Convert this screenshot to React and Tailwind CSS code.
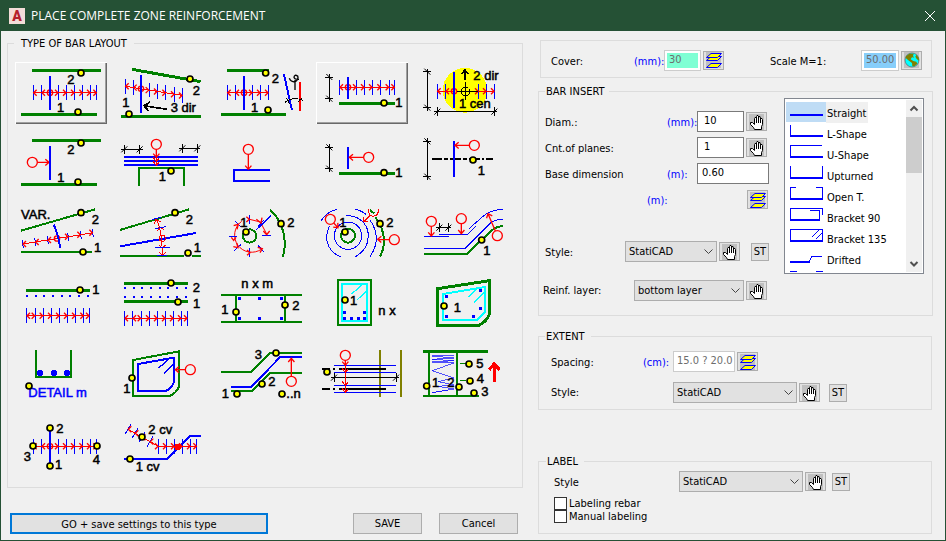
import React, { useState } from 'react';
import clsx from 'clsx';

const GREEN = '#008000';
const BLUE = '#0000ff';
const RED = '#ff0000';
const BLACK = '#000000';

/* ---------- drawing helpers, 3 units = 1 px ---------- */

const P = ({ d, c = BLACK, w = 3, ...rest }) => (
  <path d={d} fill="none" stroke={c} strokeWidth={w} {...rest} />
);

const Dots = ({ at }) => at.map(([x, y]) => (
  <circle key={`${x}-${y}`} cx={x} cy={y} r="9" fill="#ffff00" stroke={BLACK} strokeWidth="5" shapeRendering="auto" />
));

const T = ({ x, y, c = BLACK, children }) => (
  <text x={x} y={y} fill={c} stroke={c} strokeWidth="1.5" fontSize="39" fontFamily="Liberation Sans, Arial, sans-serif">
    {children}
  </text>
);

const Squares = ({ at }) => at.map(([x, y]) => (
  <rect key={`${x}-${y}`} x={x - 4} y={y - 4} width="9" height="9" fill={BLUE} />
));

// Arrow from one point to another, open head at the end
const Arrow = ({ from, to, c = RED, w = 3, size = 12 }) => {
  const a = Math.atan2(to[1] - from[1], to[0] - from[0]);
  const leg = (s) => `${to[0] - size * 1.2 * Math.cos(a + s)} ${to[1] - size * 1.2 * Math.sin(a + s)}`;
  return <P c={c} w={w} d={`M${from[0]} ${from[1]}L${to[0]} ${to[1]}M${leg(0.7)}L${to[0]} ${to[1]}L${leg(-0.7)}`} />;
};

// Row of stirrups with red arrows going out of the base bar
const Series = ({ xs, y, base, slope = 0, h = 22, lean = 0, ring = true }) => {
  const at = (x) => y + (x - xs[0]) * slope;
  const last = xs[xs.length - 1];
  return (
    <g>
      {xs.map((x) => (
        <P key={x} c={BLUE} d={`M${x + lean} ${at(x) - h}L${x - lean} ${at(x) + h}`} />
      ))}
      <P c={RED} d={`M${xs[0]} ${y}L${last} ${at(last)}`} />
      <g shapeRendering="auto">
        {xs.map((x) => (
          <P key={x} c={RED} w={4} d={x < base
            ? `M${x + 10} ${at(x) - 9}L${x + 1} ${at(x)}L${x + 10} ${at(x) + 9}`
            : `M${x - 10} ${at(x) - 9}L${x - 1} ${at(x)}L${x - 10} ${at(x) + 9}`} />
        ))}
        {ring && <circle cx={base} cy={at(base)} r="8" fill="none" stroke={RED} strokeWidth="4" />}
      </g>
    </g>
  );
};

const DimV = ({ x, y1, y2 }) => (
  <g>
    <P d={`M${x} ${y1 - 9}V${y2 + 9}M${x - 13} ${y1}H${x + 12}M${x - 13} ${y2}H${x + 12}`} />
    <P shapeRendering="auto" d={`M${x - 9} ${y1 - 9}L${x + 9} ${y1 + 9}M${x - 9} ${y2 - 9}L${x + 9} ${y2 + 9}`} />
  </g>
);

const DimH = ({ y, x1, x2 }) => (
  <g>
    <P d={`M${x1 - 9} ${y}H${x2 + 9}M${x1} ${y - 13}V${y + 13}M${x2} ${y - 13}V${y + 13}`} />
    <P shapeRendering="auto" d={`M${x1 - 9} ${y + 9}L${x1 + 9} ${y - 9}M${x2 - 9} ${y + 9}L${x2 + 9} ${y - 9}`} />
  </g>
);

const Ring = ({ x, y, to }) => {
  const a = Math.atan2(to[1] - y, to[0] - x);
  return (
    <g shapeRendering="auto">
      <circle cx={x} cy={y} r="15" fill="none" stroke={RED} strokeWidth="4" />
      <Arrow from={[x + 15 * Math.cos(a), y + 15 * Math.sin(a)]} to={to} w={4} />
    </g>
  );
};

// Hoops around a round column, angles clockwise in degrees
const spiral = [-48, -90, -134, 180, 136, 90, 48].map((deg) => {
  const a = (deg * Math.PI) / 180;
  return { a, x: 719 + 50 * Math.cos(a), y: 318 + 50 * Math.sin(a) };
});

/* ---------- bar layout types ---------- */

const layouts = [
  { name: 'Two edges', box: '45 186', raised: true, art: (
    <>
      <P c={GREEN} w={9} d="M96 211H303M63 343H291" />
      <Series xs={[100, 125, 175, 199, 223, 248, 271, 290]} y={278} base={150} />
      <P c={BLUE} w={6} d="M150 228V330" />
      <Dots at={[[243, 219], [234, 336]]} />
      <T x={202} y={252}>2</T><T x={171} y={336}>1</T>
    </>
  ) },
  { name: 'Two edges with direction', box: '345 186', art: (
    <>
      <P c={GREEN} w={9} d="M396 208L602 245M363 349H602" />
      <Series xs={[376, 400, 447, 472, 497, 523, 547]} y={259} slope={0.16} base={423} />
      <P c={BLUE} w={6} d="M423 225V339" />
      <Arrow from={[500, 328]} to={[432, 317]} c={BLACK} w={5} size={18} />
      <Dots at={[[570, 237], [387, 342]]} />
      <T x={578} y={286}>2</T><T x={367} y={321}>1</T><T x={512} y={335}>3 dir</T>
    </>
  ) },
  { name: 'Two edges with angle', box: '648 186', art: (
    <>
      <P c={GREEN} w={9} d="M681 211H807M663 343H858" />
      <Series xs={[682, 707, 757, 781, 805]} y={278} base={732} />
      <P c={BLUE} w={6} d="M732 228V330" />
      <P c={BLUE} w={6} d="M852 223L876 331" />
      <P c={RED} w={6} d="M900 246V332" />
      <P d="M855 307Q868 297 880 296Q895 295 908 301M860 294L869 312M894 306L906 294" />
      <P w={4} shapeRendering="auto" d="M885 240V270M868 235Q872 246 885 246Q897 238 893 228Q883 222 882 232Q884 239 897 238" />
      <Dots at={[[797, 219], [804, 330]]} />
      <T x={815} y={249}>2</T><T x={753} y={336}>1</T>
    </>
  ) },
  { name: 'One edge', box: '318 21', raised: true, art: (
    <>
      <DimV x={358} y1={66} y2={131} />
      <P c={GREEN} w={9} d="M387 146H555" />
      <Series xs={[389, 439, 463, 487, 512, 537, 554]} y={97} base={414} />
      <P c={BLUE} w={6} d="M414 66V132" />
      <Dots at={[[522, 144]]} />
      <T x={556} y={155}>1</T>
    </>
  ) },
  { name: 'Center and direction', box: '621 21', art: (
    <>
      <circle cx="765" cy="106" r="67" fill="#ffff00" />
      <DimV x={652} y1={50} y2={158} />
      <DimH y={170} x1={682} x2={853} />
      <Series xs={[682, 707]} y={109} base={732} />
      <Series xs={[805, 829, 853]} y={109} base={790} ring={false} />
      <P c={RED} d="M707 109H732" />
      <P c={BLUE} w={6} d="M732 51V158" />
      <P d="M740 109H805M767 82V136" />
      <circle cx="767" cy="109" r="13" fill="none" stroke={BLACK} strokeWidth="3" />
      <Arrow from={[765, 74]} to={[765, 45]} c={BLACK} w={5} size={14} />
      <T x={790} y={75}>2 dir</T><T x={747} y={159}>1 cen</T>
    </>
  ) },
  { name: 'Single bar, two edges', box: '15 6', art: (
    <>
      <P c={GREEN} w={9} d="M66 31H273M33 163H261" />
      <Ring x={67} y={97} to={[117, 97]} />
      <P c={BLUE} w={6} d="M120 48V150" />
      <Dots at={[[213, 39], [204, 156]]} />
      <T x={172} y={72}>2</T><T x={142} y={155}>1</T>
    </>
  ) },
  { name: 'Bars over support', box: '315 6', art: (
    <>
      <DimH y={58} x1={343} x2={389} />
      <DimH y={55} x1={517} x2={562} />
      <P c={BLUE} w={6} d="M342 81H564M342 93H564M342 105H564" />
      <P c={GREEN} w={6} d="M387 168V114H522V168" />
      <Ring x={439} y={43} to={[439, 82]} />
      <Arrow from={[439, 60]} to={[439, 94]} /><Arrow from={[439, 60]} to={[439, 106]} />
      <Dots at={[[483, 123]]} />
      <T x={446} y={152}>1</T>
    </>
  ) },
  { name: 'Bracket bar', box: '618 6', art: (
    <>
      <P c={BLUE} w={6} d="M780 120H672V153H780" />
      <Ring x={715} y={58} to={[715, 118]} />
    </>
  ) },
  { name: 'Single bar, one edge', box: '318 6', art: (
    <>
      <DimV x={358} y1={52} y2={116} />
      <P c={GREEN} w={9} d="M387 130H555" />
      <P c={BLUE} w={6} d="M414 51V117" />
      <Ring x={476} y={82} to={[418, 82]} />
      <Dots at={[[522, 128]]} />
      <T x={556} y={140}>1</T>
    </>
  ) },
  { name: 'Single bar on axis', box: '621 6', art: (
    <>
      <DimV x={652} y1={34} y2={140} />
      <P w={6} d="M666 87H696M702 87H714M720 87H753M759 87H771M777 87H810M816 87H822M828 87H849" />
      <P c={BLUE} w={6} d="M732 33V141" />
      <Ring x={793} y={46} to={[735, 46]} />
      <Dots at={[[789, 90]]} />
      <T x={803} y={134}>1</T>
    </>
  ) },
  { name: 'Variable length', box: '15 216', art: (
    <>
      <P c={GREEN} w={6} d="M33 302L255 238M33 366H246" />
      <Series xs={[38, 76, 113, 175, 212, 248]} y={342} slope={-0.16} h={12} lean={-2} base={141} />
      <P c={BLUE} w={6} d="M131 284Q144 310 151 355" />
      <Dots at={[[213, 248], [219, 366]]} />
      <T x={33} y={267}>VAR.</T><T x={245} y={281}>2</T><T x={252} y={367}>1</T>
    </>
  ) },
  { name: 'Fan between edges', box: '315 216', art: (
    <>
      <P c={GREEN} w={6} d="M330 300L537 238M330 378H522M546 378H573" />
      <P c={BLUE} w={6} d="M330 349L558 309" />
      <P c={RED} d="M438 267Q456 296 457 376" />
      <P c={RED} d="M432 282L438 268L453 276M442 304L448 290L461 298M448 346L457 355L466 346M447 366L457 376L468 366" />
      <P c={BLUE} d="M425 269L452 262M436 296L467 290M436 352H480M442 376H472" />
      <circle cx="457" cy="325" r="9" fill="none" stroke={RED} strokeWidth="3" />
      <Dots at={[[495, 248], [534, 369]]} />
      <T x={527} y={282}>2</T><T x={551} y={366}>1</T>
    </>
  ) },
  { name: 'Radial', box: '618 216', art: (
    <>
      <P c={RED} shapeRendering="auto" d="M719 268L751 276L770 312M695 274A50 50 0 0 0 755 357" />
      {spiral.map(({ a, x, y }) => (
        <P key={a} c={BLUE} d={`M${x - 13 * Math.cos(a)} ${y - 13 * Math.sin(a)}L${x + 13 * Math.cos(a)} ${y + 13 * Math.sin(a)}`} />
      ))}
      <P c={BLUE} d="M757 316H782" />
      <P c={RED} w={4} shapeRendering="auto" d="M760 303L770 314L779 303M739 268L753 279L756 263M709 260L718 268L709 276M681 298L685 283L671 287M664 322L671 331L678 322M680 339L684 353L670 350M711 360L720 368L711 376M743 352L757 356L750 368" />
      <P c={BLUE} w={4} d="M738 300L783 257" />
      <circle cx="719" cy="318" r="20" fill="none" stroke={GREEN} strokeWidth="6" />
      <P c={GREEN} w={6} d="M780 240L790 249Q813 275 820 307Q829 345 819 380" />
      <Dots at={[[708, 306], [813, 281]]} />
      <T x={691} y={290}>1</T><T x={832} y={290}>2</T>
    </>
  ) },
  { name: 'Circular', box: '318 216', art: (
    <>
      <circle cx="414" cy="317" r="41" fill="none" stroke={BLUE} strokeWidth="3" />
      <P c={BLUE} d="M358 289Q342 322 357 350Q368 372 393 380M408 257Q458 257 473 300Q483 355 436 380M333 272Q350 245 382 238M435 238Q456 242 469 254M480 270Q518 325 480 380" />
      <circle cx="414" cy="317" r="21" fill="none" stroke={GREEN} strokeWidth="6" />
      <P c={GREEN} w={6} d="M480 240L492 250M496 262Q515 285 520 315Q526 350 510 380" />
      <Ring x={361} y={268} to={[384, 293]} />
      <P c={RED} d="M476 238Q475 259 490 259Q506 257 505 238" />
      <Arrow from={[480, 256]} to={[460, 276]} />
      <Ring x={553} y={329} to={[503, 328]} />
      <Dots at={[[405, 306], [510, 281]]} />
      <T x={388} y={290}>1</T><T x={529} y={290}>2</T>
    </>
  ) },
  { name: 'Stairs bend', box: '621 216', art: (
    <>
      <P c={BLUE} d="M642 319H717M687 314H772L798 289M777 296L818 260Q842 239 879 238M642 355H765L842 278Q855 268 879 268" />
      <P c={GREEN} w={6} d="M642 372H770L843 303Q857 290 879 288" />
      <DimH y={293} x1={688} x2={715} />
      <Ring x={664} y={274} to={[664, 318]} />
      <Ring x={754} y={266} to={[754, 311]} />
      <Ring x={862} y={317} to={[834, 251]} />
      <Dots at={[[815, 330]]} />
      <T x={820} y={374}>1</T>
    </>
  ) },
  { name: 'Section, one layer', box: '15 21', art: (
    <>
      <P c={GREEN} w={9} d="M48 76H240" />
      <P c={BLUE} w={6} d="M48 93H240" strokeDasharray="6 20" />
      <Series xs={[50, 75, 99, 124, 148, 172, 196, 221, 238]} y={152} base={70} ring={false} />
      <Dots at={[[210, 75]]} />
      <T x={247} y={87}>1</T>
    </>
  ) },
  { name: 'Section, two layers', box: '315 21', art: (
    <>
      <P c={GREEN} w={9} d="M342 56H534M342 110H534" />
      <P c={BLUE} w={6} d="M342 69H534M342 96H534" strokeDasharray="6 20" />
      <Series xs={[344, 368, 393, 418, 442, 466, 490, 514, 532]} y={160} base={380} ring={false} />
      <Dots at={[[483, 54], [504, 111]]} />
      <T x={548} y={80}>2</T><T x={549} y={129}>1</T>
    </>
  ) },
  { name: 'Rectangle n x m', box: '618 21', art: (
    <>
      <P c={GREEN} w={6} d="M633 90H876M633 171H876M678 90V171M825 90V171" />
      <Squares at={[[688, 100], [748, 100], [814, 100], [688, 160], [748, 160], [814, 160]]} />
      <Dots at={[[678, 141], [825, 120]]} />
      <T x={694} y={69}>n x m</T><T x={634} y={147}>1</T><T x={847} y={135}>2</T>
    </>
  ) },
  { name: 'Column n x', box: '318 21', art: (
    <>
      <P c={GREEN} w={6} d="M384 45H483V180H384Z" />
      <P c="#00ffff" w={6} d="M396 57H471V168H396Z" />
      <P c="#00ffff" w={4} d="M455 60L425 87M470 77L442 104" />
      <Squares at={[[404, 142], [463, 142], [404, 160], [424, 160], [444, 160], [463, 160]]} />
      <Dots at={[[405, 105]]} />
      <T x={420} y={120}>1</T><T x={505} y={150}>n x</T>
    </>
  ) },
  { name: 'Polygon column', box: '621 21', art: (
    <>
      <P c={GREEN} w={9} d="M683 71L838 47V148Q829 171 806 181H683Z" />
      <P c="#00ffff" w={6} d="M699 87L824 66V141L802 165H699Z" />
      <P c="#00ffff" w={4} d="M801 70L776 96M822 82L792 112" />
      <Squares at={[[709, 94], [811, 76], [811, 130], [790, 154], [709, 154]]} />
      <Dots at={[[702, 123]]} />
      <T x={731} y={142}>1</T>
    </>
  ) },
  { name: 'Detail m', box: '15 231', art: (
    <>
      <P c={GREEN} w={6} d="M78 255V336H183V255" />
      {[90, 132, 171].map((x) => <circle key={x} cx={x} cy="324" r="9" fill={BLUE} />)}
      <T x={55} y={396} c={BLUE}>DETAIL m</T>
      <Dots at={[[57, 363]]} />
    </>
  ) },
  { name: 'Polygon hoop', box: '315 231', art: (
    <>
      <P c={GREEN} w={6} d="M369 285L507 259V364Q499 385 478 393H369Z" />
      <P c={BLUE} w={6} d="M384 297L492 278V350Q486 370 467 378H384Z" />
      <P c={BLUE} w={4} d="M477 282L446 309M490 298L462 325" />
      <Ring x={541} y={314} to={[496, 314]} />
      <Dots at={[[366, 339]]} />
      <T x={340} y={383}>1</T>
    </>
  ) },
  { name: 'Polyline path', box: '618 231', art: (
    <>
      <P c={GREEN} w={6} d="M633 321H723L780 264H876M663 378H725L780 324H876" />
      <P c={BLUE} w={6} d="M663 366H723L811 276H876" />
      <Ring x={844} y={349} to={[844, 280]} />
      <Dots at={[[798, 264], [756, 357], [681, 387], [816, 387]]} />
      <T x={734} y={282}>3</T><T x={775} y={363}>2</T><T x={635} y={400}>1</T><T x={829} y={400}>..n</T>
    </>
  ) },
  { name: 'Axis section', box: '318 231', art: (
    <>
      <P c="#808000" w={6} d="M510 255V396M573 255V396" />
      <P c={BLUE} d="M372 301H558M372 322H558M372 361H558M372 382H558" />
      <P w={6} d="M336 312H360M369 312H375M387 312H528M336 372H360M369 372H375M387 372H528" />
      <DimH y={338} x1={372} x2={558} />
      <Ring x={406} y={271} to={[406, 301]} />
      <Arrow from={[406, 300]} to={[406, 322]} /><Arrow from={[406, 322]} to={[406, 361]} /><Arrow from={[406, 361]} to={[406, 382]} />
      <Dots at={[[351, 321]]} />
    </>
  ) },
  { name: 'Wall mesh', box: '621 231', art: (
    <>
      <P c={GREEN} w={9} d="M639 259H834" />
      <P c={GREEN} w={6} d="M657 259V393M741 259V393M639 393H807" />
      <P c={BLUE} w={2} d="M732 270L666 273L732 279L666 283L732 287L666 291L732 294L666 317L732 339L685 350L732 360L685 364L732 372L666 383L714 375" />
      <P c={GREEN} d="M750 296H768M750 345L768 348" />
      <Arrow from={[853, 351]} to={[853, 296]} w={9} size={20} />
      <Dots at={[[650, 363], [747, 366], [777, 297], [780, 348], [792, 384]]} />
      <T x={666} y={367}>1</T><T x={712} y={367}>2</T>
      <T x={799} y={310}>5</T><T x={800} y={354}>4</T><T x={814} y={392}>3</T>
    </>
  ) },
  { name: 'Four points', box: '45 36', art: (
    <>
      <Series xs={[100, 125, 175, 199, 223, 248, 271, 290]} y={139} base={150} />
      <P c={BLUE} w={6} d="M150 84V198" />
      <Dots at={[[99, 138], [150, 84], [150, 198], [291, 138]]} />
      <T x={71} y={182}>3</T><T x={169} y={98}>2</T><T x={165} y={206}>1</T><T x={278} y={191}>4</T>
    </>
  ) },
  { name: 'Two curves', box: '345 36', art: (
    <>
      <P c={BLUE} w={6} d="M372 177H500L569 108H603" />
      <Series xs={[475, 499, 523, 547, 571, 590]} y={139} base={470} ring={false} />
      <Series xs={[384, 405, 426, 450]} y={88} slope={0.56} h={15} lean={9} base={470} ring={false} />
      <P c={RED} d="M450 125L475 139" />
      <circle cx="533" cy="141" r="10" fill={RED} />
      <Dots at={[[426, 111], [390, 177]]} />
      <T x={445} y={102}>2 cv</T><T x={407} y={213}>1 cv</T>
    </>
  ) },
];

const LayoutButton = ({ item }) => (
  <button
    type="button"
    aria-label={item.name}
    className={clsx(
      'h-[62px] w-[92px]',
      item.raised && 'shadow-[inset_1px_1px_#ffffff,inset_-1px_-1px_#696969,inset_-2px_-2px_#a0a0a0]'
    )}
  >
    <svg width="92" height="62" viewBox={`${item.box} 276 186`} shapeRendering="crispEdges" className="block">
      {item.art}
    </svg>
  </button>
);

/* ---------- small controls ---------- */

const Hand = () => (
  <svg viewBox="0 0 15 16" className="h-4 w-[15px] overflow-visible bg-[#c0c0c0]">
    <path d="M5.5 10.5V4.5L6 3.5H7L7.5 4V2.5L8 1.5H9L9.5 2.5H11L11.5 4.5H13L13.5 5.5V10.5L12.5 12.5V15.5H5.5L4.5 13.5L1.5 10.5V8.5H3.5Z" fill="#fff" stroke="#000" />
    <path d="M7.5 4V9M9.5 2V9M11.5 4V9" stroke="#000" />
  </svg>
);

const Layers = () => (
  <svg viewBox="0 0 15 16" className="h-4 w-[15px] overflow-visible bg-[#c0c0c0]">
    <g fill="#ffff00" stroke="#0000ff">
      <path d="M5 11.5H15.5L11.5 15.5H0.5Z" />
      <path d="M5 4.5H15.5L11.5 8.5H0.5Z" />
      <path d="M5 1.5H15.5L11.5 5.5H0.5Z" />
    </g>
  </svg>
);

const Globe = () => (
  <svg viewBox="0 0 45 48" className="h-4 w-[15px] overflow-visible bg-[#c0c0c0]">
    <circle cx="24" cy="24" r="21" fill="#00ffff" stroke="#606060" strokeWidth="2" />
    <path d="M6 13L16 5H29L27 12L31 17L24 16L20 22L28 27L37 29L40 35L31 43L25 43L24 33L13 25L5 18Z" fill="#808000" />
    <path d="M37 8L44 17L45 26L38 21L34 14Z" fill="#808000" />
  </svg>
);

const IconButton = ({ label, children, className }) => (
  <button
    type="button"
    aria-label={label}
    className={clsx('flex h-[19px] w-[21px] shrink-0 items-center justify-center border border-[#adadad] bg-[#e1e1e1]', className)}
  >
    {children}
  </button>
);

const StButton = ({ className }) => (
  <button type="button" className={clsx('h-[18px] w-[18px] shrink-0 border border-[#adadad] bg-[#e1e1e1] text-center leading-4', className)}>
    ST
  </button>
);

const Select = ({ id, value, className }) => (
  <div className={clsx('relative h-[21px] shrink-0', className)}>
    <select id={id} className="block h-full w-full appearance-none border border-[#adadad] bg-[#e1e1e1] pt-px pl-[3px] leading-4 outline-none">
      <option>{value}</option>
    </select>
    <svg viewBox="0 0 9 6" className="pointer-events-none absolute top-2 right-1 h-1.5 w-[9px]" fill="none" stroke="#444">
      <path d="M0.5 0.5L4.5 4.5L8.5 0.5" />
    </svg>
  </div>
);

const Group = ({ title, legendClass, className, children }) => (
  <fieldset className={clsx('min-w-0 border border-[#dcdcdc]', className)}>
    <legend className={clsx('h-3.5 leading-4 whitespace-nowrap', legendClass)}>{title}</legend>
    {children}
  </fieldset>
);

const field = 'h-[21px] shrink-0 border pb-0.5 outline-none';
const pushButton = 'h-[21px] border bg-[#e1e1e1]';
const unit = 'w-[30px] shrink-0 whitespace-nowrap pt-1 text-[#0000ff]';
const caption = 'shrink-0 whitespace-nowrap pt-1';

/* ---------- bar shapes ---------- */

const shapes = [
  { name: 'Straight', thick: 'M4 13H37' },
  { name: 'L-Shape', thick: 'M4 13H37', thin: 'M4.5 2V13' },
  { name: 'U-Shape', thick: 'M4 13H37', thin: 'M36 1.5H4.5V13' },
  { name: 'Upturned', thick: 'M4 13H37', thin: 'M4.5 1V13M36.5 1V13' },
  { name: 'Open T.', thick: 'M4 13H37', thin: 'M10 1.5H4.5V13M30 1.5H36.5V13' },
  { name: 'Bracket 90', thick: 'M4 13H34', thin: 'M4.5 13V1.5H36.5V8M24 3.5H33.5V13' },
  { name: 'Bracket 135', thick: 'M4 13H37', thin: 'M4.5 13V1.5H36.5V13M33 2L26 9M37 4L30 11' },
  { name: 'Drifted', thick: 'M4 13H24', thin: 'M23 13L26 7.5H36' },
];

const ShapeList = () => {
  const [active, setActive] = useState('Straight');
  return (
    <div className="flex h-44 w-[140px] shrink-0 border border-[#828790] bg-white p-px">
      <ul role="listbox" aria-label="Bar shape" className="flex-1 overflow-hidden pt-0.5">
        {shapes.map((s) => (
          <li key={s.name} role="option" aria-selected={active === s.name} onClick={() => setActive(s.name)} className="flex h-[21px]">
            <svg viewBox="0 0 40 20" shapeRendering="crispEdges" className={clsx('h-5 w-10 shrink-0', active === s.name && 'bg-[#bfdcf5]')}>
              <path d={s.thick} stroke="#0000ff" strokeWidth="2" fill="none" />
              {s.thin && <path d={s.thin} stroke="#0000ff" fill="none" />}
            </svg>
            <span className={clsx('h-[21px] pr-0.5 pl-px leading-6 whitespace-nowrap', active === s.name && 'bg-[#f0f0f0]')}>{s.name}</span>
          </li>
        ))}
        <li role="option" aria-selected="false" aria-label="Open B.">
          <svg viewBox="0 0 40 20" shapeRendering="crispEdges" className="h-5 w-10">
            <path d="M4 1.5H11M30 1.5H37" stroke="#0000ff" fill="none" />
          </svg>
        </li>
      </ul>
      <div className="flex w-4 flex-col items-center bg-[#f0f0f0]">
        <svg viewBox="0 0 16 17" className="h-[17px] w-4" fill="none" stroke="#505050" strokeWidth="2"><path d="M4.5 10.5L8 7L11.5 10.5" /></svg>
        <div className="h-14 w-full bg-[#cdcdcd]" />
        <svg viewBox="0 0 16 17" className="mt-auto h-[17px] w-4" fill="none" stroke="#505050" strokeWidth="2"><path d="M4.5 7L8 10.5L11.5 7" /></svg>
      </div>
    </div>
  );
};

export default function App() {
  return (
    <div className="flex min-h-screen flex-col border-x border-b border-[#255135] bg-[#f0f0f0] font-['DejaVu_Sans_Condensed','DejaVu_Sans',sans-serif] text-[11px] text-black">
      <header className="flex h-[31px] items-center bg-[#255135] pr-2.5 pl-2 text-white">
        <svg viewBox="0 0 16 16" className="h-4 w-4">
          <rect width="16" height="16" fill="#f3dcd8" />
          <text x="8" y="13" textAnchor="middle" fontSize="14" fontWeight="900" fontFamily="Roboto, sans-serif" fill="#b5202b">A</text>
        </svg>
        <h1 className="ml-1.5 font-['Open_Sans',sans-serif] text-[12px] leading-4">PLACE COMPLETE ZONE REINFORCEMENT</h1>
        <button type="button" aria-label="Close" className="ml-auto">
          <svg viewBox="0 0 10 10" className="h-2.5 w-2.5" stroke="#fff" fill="none"><path d="M0 0L10 10M10 0L0 10" /></svg>
        </button>
      </header>

      <main className="grid grid-cols-[516fr_395fr] gap-[15px] pt-[5px] pr-3 pl-1.5">
        <div>
          <Group title="TYPE OF BAR LAYOUT" className="pr-[13px] pb-[13px] pl-[7px]" legendClass="ml-[-1px] px-[7px]">
            <div className="grid grid-cols-5 gap-2 pt-3">
              {layouts.map((item) => <LayoutButton key={item.name} item={item} />)}
            </div>
          </Group>
          <div className="mt-[25px] flex gap-[17px] pr-[5px] pl-[3px]">
            <button type="button" className={clsx(pushButton, 'w-[258px] border-2 border-[#0078d7] pt-0.5 leading-4')}>GO + save settings to this type</button>
            <button type="button" className={clsx(pushButton, 'ml-auto w-[69px] border-[#adadad] pt-0.5')}>SAVE</button>
            <button type="button" className={clsx(pushButton, 'w-[79px] border-[#adadad] pt-0.5')}>Cancel</button>
          </div>
        </div>

        <div className="flex flex-col">
          <section className="mt-1 mr-px ml-0.5 flex h-[38px] items-center border border-[#dcdcdc] pt-2 pr-[9px] pb-1.5 pl-2.5">
            <label htmlFor="cover" className={clsx(caption, 'w-[83px]')}>Cover:</label>
            <span className={unit}>(mm):</span>
            <input id="cover" disabled defaultValue="30" className={clsx(field, 'w-[37px] border-[#cccccc] bg-[#7fffd4] pl-1 text-[#6d6d6d] shadow-[inset_0_0_0_2px_#ffffff]')} />
            <IconButton label="Pick cover" className="ml-0.5"><Layers /></IconButton>
            <label htmlFor="scale" className={clsx(caption, 'ml-auto w-[91px]')}>Scale M=1:</label>
            <input id="scale" disabled defaultValue="50.00" className={clsx(field, 'w-[38px] border-[#cccccc] bg-[#87cefa] pl-1 text-[#6d6d6d] shadow-[inset_0_0_0_2px_#ffffff]')} />
            <IconButton label="Global scale" className="ml-0.5"><Globe /></IconButton>
          </section>

          <Group title="BAR INSERT" className="mt-1.5 h-[232px] pr-2" legendClass="ml-1.5 pr-1 pl-px">
            <div className="flex items-start justify-between">
              <div className="flex w-[231px] flex-col gap-[5px] pt-[13px] pl-1.5">
                <div className="flex h-[21px] items-center">
                  <label htmlFor="diam" className={clsx(caption, 'w-[122px]')}>Diam.:</label>
                  <span className={unit}>(mm):</span>
                  <input id="diam" defaultValue="10" className={clsx(field, 'w-[47px] border-[#7a7a7a] bg-white pl-1.5')} />
                  <IconButton label="Pick diameter" className="ml-0.5"><Hand /></IconButton>
                </div>
                <div className="flex h-[21px] items-center">
                  <label htmlFor="planes" className={clsx(caption, 'w-[152px]')}>Cnt.of planes:</label>
                  <input id="planes" defaultValue="1" className={clsx(field, 'w-[47px] border-[#7a7a7a] bg-white pl-1.5')} />
                  <IconButton label="Pick planes" className="ml-0.5"><Hand /></IconButton>
                </div>
                <div className="flex h-[21px] items-center">
                  <label htmlFor="base" className={clsx(caption, 'w-[122px]')}>Base dimension</label>
                  <span className={unit}>(m):</span>
                  <input id="base" defaultValue="0.60" className={clsx(field, 'w-[72px] border-[#7a7a7a] bg-white pl-1')} />
                </div>
                <div className="flex h-[21px] items-center justify-between pr-0.5 pl-[102px]">
                  <span className={unit}>(m):</span>
                  <IconButton label="Pick dimension"><Layers /></IconButton>
                </div>
                <div className="mt-[26px] flex h-[21px] items-center">
                  <label htmlFor="bar-style" className={clsx(caption, 'w-20')}>Style:</label>
                  <Select id="bar-style" value="StatiCAD" className="w-[92px]" />
                  <IconButton label="Pick bar style" className="ml-0.5"><Hand /></IconButton>
                  <StButton className="ml-[11px]" />
                </div>
                <div className="mt-[13px] -ml-0.5 flex h-[21px] items-center">
                  <label htmlFor="layer" className="w-[91px] pt-0.5 whitespace-nowrap">Reinf. layer:</label>
                  <Select id="layer" value="bottom layer" className="w-[110px]" />
                  <IconButton label="Pick layer" className="ml-0.5"><Hand /></IconButton>
                </div>
              </div>
              <ShapeList />
            </div>
          </Group>

          <Group title="EXTENT" className="mt-[13px] mr-px pt-2 pb-1.5 pl-3" legendClass="-ml-1.5 pr-1.5 pl-px">
            <div className="flex h-[21px] items-center">
              <label htmlFor="spacing" className={clsx(caption, 'w-[92px]')}>Spacing:</label>
              <span className={unit}>(cm):</span>
              <input id="spacing" disabled defaultValue="15.0 ? 20.0" className={clsx(field, 'w-[62px] border-[#cccccc] bg-white pl-[3px] text-[#6d6d6d]')} />
              <IconButton label="Pick spacing" className="ml-0.5"><Layers /></IconButton>
            </div>
            <div className="mt-2.5 flex h-[21px] items-center">
              <label htmlFor="extent-style" className="w-[122px] pt-0.5">Style:</label>
              <Select id="extent-style" value="StatiCAD" className="w-[124px]" />
              <IconButton label="Pick extent style" className="ml-0.5"><Hand /></IconButton>
              <StButton className="ml-[9px]" />
            </div>
          </Group>

          <Group title="LABEL" className="mt-11 mr-px pt-[3px] pb-2.5 pl-[15px]" legendClass="-ml-2 pr-1.5 pl-px">
            <div className="flex h-[21px] items-center">
              <label htmlFor="label-style" className={clsx(caption, 'w-[125px]')}>Style</label>
              <Select id="label-style" value="StatiCAD" className="w-[124px]" />
              <IconButton label="Pick label style" className="ml-0.5"><Hand /></IconButton>
              <StButton className="ml-1.5" />
            </div>
            <div className="mt-[5px] flex flex-col items-start">
              {['Labeling rebar', 'Manual labeling'].map((t) => (
                <label key={t} className="flex h-[13px] items-center gap-0.5 leading-[13px] whitespace-nowrap">
                  <input type="checkbox" className="h-[13px] w-[13px] appearance-none border border-[#333] bg-white checked:bg-[#333]" />
                  {t}
                </label>
              ))}
            </div>
          </Group>
        </div>
      </main>
    </div>
  );
}
